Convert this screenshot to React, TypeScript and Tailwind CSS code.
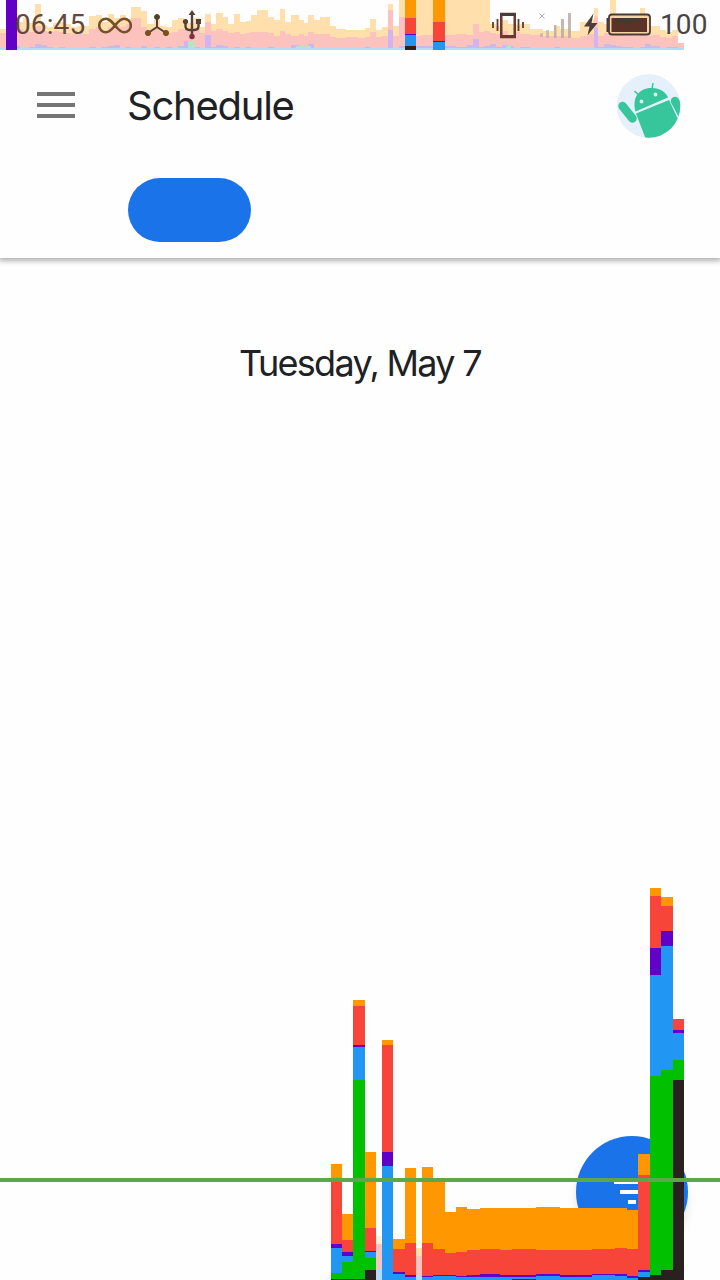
const ORANGE = "#ff9800";
const RED = "#f7453a";
const PURPLE = "#6200c8";
const BLUE = "#2196f3";
const GREEN = "#00c000";
const BLACK = "#2a2020";
const PALE_ORANGE = "#ffdfac";
const PALE_RED = "#fcc3be";
const PALE_BLUE = "#b4dcf8";

type Bar = { x: number; end: number; parts: [number, string][] };

const bars: Bar[] = [
  { x: 331, end: 342, parts: [[1164, ORANGE], [1182, RED], [1244, PURPLE], [1248, BLUE], [1273, GREEN], [1279, BLACK]] },
  { x: 342, end: 353, parts: [[1214, ORANGE], [1240, RED], [1252, PURPLE], [1256, BLUE], [1262, GREEN], [1279, BLACK]] },
  { x: 353, end: 365, parts: [[1000, ORANGE], [1006, RED], [1045, PURPLE], [1047, BLUE], [1080, GREEN], [1279, BLACK]] },
  { x: 365, end: 376, parts: [[1152, ORANGE], [1228, RED], [1251, PURPLE], [1252, BLUE], [1258, GREEN], [1270, BLACK]] },
  { x: 376, end: 382, parts: [[1236, "#fff0dc"], [1244, PALE_RED], [1270, PALE_BLUE]] },
  { x: 382, end: 393, parts: [[1040, ORANGE], [1045, RED], [1152, PURPLE], [1166, BLUE]] },
  { x: 393, end: 405, parts: [[1239, ORANGE], [1249, RED], [1272, PURPLE], [1274, BLUE]] },
  { x: 405, end: 416, parts: [[1168, ORANGE], [1243, RED], [1275, PURPLE], [1277, BLUE]] },
  { x: 416, end: 422, parts: [[1248, PALE_ORANGE], [1256, PALE_RED], [1276, PALE_BLUE]] },
  { x: 422, end: 433, parts: [[1167, ORANGE], [1243, RED], [1276, PURPLE], [1277, BLUE]] },
  { x: 433, end: 445, parts: [[1180, ORANGE], [1249, RED], [1275, PURPLE], [1276, BLUE]] },
  { x: 445, end: 456, parts: [[1212, ORANGE], [1253, RED], [1275, PURPLE], [1276, BLUE]] },
  { x: 456, end: 467, parts: [[1207, ORANGE], [1252, RED], [1276, PURPLE], [1277, BLUE]] },
  { x: 467, end: 480, parts: [[1209, ORANGE], [1250, RED], [1275, PURPLE], [1277, BLUE]] },
  { x: 480, end: 500, parts: [[1208, ORANGE], [1249, RED], [1274, PURPLE], [1277, BLUE]] },
  { x: 500, end: 512, parts: [[1208, ORANGE], [1250, RED], [1275, PURPLE], [1277, BLUE]] },
  { x: 512, end: 536, parts: [[1208, ORANGE], [1249, RED], [1275, PURPLE], [1277, BLUE], [1279, BLACK]] },
  { x: 536, end: 560, parts: [[1207, ORANGE], [1250, RED], [1274, PURPLE], [1276, BLUE]] },
  { x: 560, end: 592, parts: [[1208, ORANGE], [1250, RED], [1275, PURPLE], [1277, BLUE]] },
  { x: 592, end: 615, parts: [[1208, ORANGE], [1249, RED], [1274, PURPLE], [1275, BLUE]] },
  { x: 615, end: 627, parts: [[1208, ORANGE], [1248, RED], [1274, PURPLE], [1276, BLUE]] },
  { x: 627, end: 638, parts: [[1210, ORANGE], [1249, RED], [1276, PURPLE], [1278, BLUE]] },
  { x: 638, end: 650, parts: [[1154, ORANGE], [1175, RED], [1270, PURPLE], [1272, BLUE], [1277, BLACK]] },
  { x: 650, end: 661, parts: [[888, ORANGE], [896, RED], [948, PURPLE], [975, BLUE], [1076, GREEN], [1275, BLACK]] },
  { x: 661, end: 673, parts: [[897, ORANGE], [906, RED], [931, PURPLE], [946, BLUE], [1070, GREEN], [1270, BLACK]] },
  { x: 673, end: 684, parts: [[1019, RED], [1030, PURPLE], [1033, BLUE], [1060, GREEN], [1080, BLACK]] },
];

// [x, top of orange, top of red, top of blue]
const history: [number, number, number, number][] = [
  [0, 29, 33, 48], [6, 29, 33, 48], [17, 22, 29, 46], [23, 18, 31, 48], [29, 23, 32, 47], [35, 4, 26, 44], [41, 25, 31, 45],
  [47, 27, 32, 47], [53, 23, 31, 48], [59, 22, 32, 47], [65, 24, 33, 48], [71, 27, 34, 48], [77, 26, 32, 48],
  [83, 26, 34, 48], [89, 16, 29, 47], [96, 15, 27, 48], [102, 22, 31, 47], [108, 14, 27, 46], [114, 18, 25, 45],
  [120, 15, 27, 48], [126, 19, 24, 47], [131, 7, 18, 48], [141, 11, 27, 46], [147, 24, 31, 48], [154, 20, 29, 47],
  [160, 26, 32, 48], [166, 27, 33, 47], [172, 20, 32, 48], [178, 18, 29, 46], [184, 23, 30, 41], [194, 18, 28, 47],
  [200, 27, 33, 48], [205, 14, 22, 35], [211, 24, 31, 47], [216, 13, 29, 45], [223, 17, 31, 46], [228, 24, 33, 48],
  [234, 14, 32, 47], [240, 22, 34, 48], [246, 21, 33, 47], [251, 15, 32, 48], [257, 10, 32, 48], [268, 17, 33, 47],
  [274, 20, 36, 48], [280, 9, 31, 48], [285, 22, 34, 48], [291, 15, 36, 45], [299, 20, 34, 48], [304, 23, 36, 48],
  [308, 15, 32, 44], [314, 20, 34, 48], [320, 17, 34, 48], [330, 26, 37, 48], [336, 29, 38, 48], [346, 30, 37, 48],
  [358, 30, 38, 48], [365, 28, 37, 47], [370, 19, 32, 48], [376, 30, 37, 48], [382, 27, 36, 48], [388, 4, 10, 30],
  [393, 26, 36, 48], [399, 0, 17, 46], [405, 0, 25, 45], [416, 0, 36, 46], [422, 0, 35, 46], [433, 0, 32, 45],
  [445, 0, 35, 46], [456, 0, 34, 47], [467, 0, 35, 45], [473, 0, 24, 39], [479, 0, 32, 47], [484, 0, 31, 46],
  [490, 24, 33, 44], [496, 26, 34, 47], [502, 20, 31, 45], [508, 24, 35, 46], [514, 25, 32, 48], [520, 24, 34, 47],
  [530, 29, 35, 48], [543, 31, 36, 48], [554, 26, 36, 47], [560, 29, 36, 48], [570, 31, 38, 48], [580, 22, 36, 48],
  [588, 19, 34, 48], [594, 8, 17, 28], [598, 22, 36, 47], [604, 24, 33, 44], [610, 0, 34, 45], [616, 24, 34, 46],
  [622, 27, 35, 47], [633, 23, 36, 48], [640, 8, 32, 47], [645, 24, 36, 44], [651, 26, 35, 46], [660, 30, 37, 48],
  [666, 32, 38, 47], [672, 30, 36, 47], [678, 43, 43, 48],
];

function StatusHistory() {
  return (
    <svg className="absolute left-0 top-0" width="720" height="50" shapeRendering="crispEdges" aria-hidden="true">
      {history.map(([x, orange, red, blue], i) => {
        const end = i + 1 < history.length ? history[i + 1][0] : 684;
        const spike = blue < 42 && blue > 20;
        return (
          <g key={x}>
            <rect x={x} y={orange} width={end - x} height={50 - orange} fill={PALE_ORANGE} />
            <rect x={x} y={red} width={end - x} height={50 - red} fill={PALE_RED} />
            <rect x={x} y={blue} width={end - x} height={50 - blue} fill={spike ? "#d0b5f0" : "#c9bbe5"} />
            <rect x={x} y={48} width={end - x} height={2} fill={PALE_BLUE} />
          </g>
        );
      })}
      <path d="M20 46h4v2h-4zM188 41h7v7h-7zM296 46h15v2h-15zM506 46h5v2h-5z" fill="#b9e2c6" />
      <rect x="6" y="0" width="11" height="50" fill="#6200c8" />
      <rect x="405" y="0" width="11" height="18" fill={ORANGE} />
      <rect x="405" y="18" width="11" height="16" fill={RED} />
      <rect x="405" y="34" width="11" height="1" fill={PURPLE} />
      <rect x="405" y="35" width="11" height="11" fill={BLUE} />
      <rect x="405" y="46" width="11" height="4" fill={BLACK} />
      <rect x="433" y="0" width="12" height="22" fill={ORANGE} />
      <rect x="433" y="22" width="12" height="19" fill={RED} />
      <rect x="433" y="41" width="12" height="1" fill={PURPLE} />
      <rect x="433" y="42" width="12" height="8" fill={BLUE} />
    </svg>
  );
}

function StatusBar() {
  return (
    <div className="relative h-[50px] w-full">
      <StatusHistory />
      <div className="relative flex h-[50px] items-center text-[28px] leading-[50px] text-[#4b3b35]">
        <span className="ml-[15px] w-[83px] font-[Roboto,sans-serif] tracking-[0.1px] text-[#65483a]">06:45</span>
        <svg width="34" height="24" viewBox="98 12 34 24" fill="none" stroke="#765027" strokeWidth="2.600">
          <path d="M115 24.500C111 20 109 17.700 106 17.700a6.800 6.800 0 0 0 0 13.600c3.500 0 6-3 9-6.800s5.500-6.800 9-6.800a6.800 6.800 0 0 1 0 13.600c-3 0-5.500-2.500-9-6.800" />
        </svg>
        <svg className="ml-[12px]" width="26" height="26" viewBox="144 12 26 26" fill="#53412f" stroke="#53412f">
          <path d="M157 17v10l-9 6M157 27l9 6" fill="none" strokeWidth="2" />
          <circle cx="157" cy="17" r="2.500" />
          <circle cx="148" cy="33" r="2.600" fill="#7a5022" stroke="#7a5022" />
          <circle cx="166" cy="33" r="2.600" fill="#7a5022" stroke="#7a5022" />
        </svg>
        <svg className="ml-[11px]" width="22" height="32" viewBox="181 9 22 32" fill="#584036">
          <path d="M192 10l-3.500 5h7z" />
          <path d="M192 14v20M185.500 22v4q0 4 4 4h5q4 0 4-4v-4" fill="none" stroke="#584036" strokeWidth="2.400" />
          <circle cx="185.500" cy="21.500" r="2.600" />
          <path d="M196 19h5v5h-5z" />
          <circle cx="192" cy="36.500" r="2.700" fill="#78333c" />
        </svg>
        <svg className="ml-auto" width="34" height="30" viewBox="491 10 34 30" fill="none" stroke="#68392c">
          <rect x="501.250" y="14" width="13.500" height="23" strokeWidth="2.500" />
          <path d="M500 14.500h16" strokeWidth="3" stroke="#493c3c" />
          <path d="M500 36.500h16" strokeWidth="3" />
          <path d="M497.500 19v12M493 22v6M518.500 19v12M523 22v6" strokeWidth="1.800" />
        </svg>
        <svg className="ml-[13px]" width="36" height="30" viewBox="538 10 36 30" fill="#b9aca4">
          <path d="M540 33h3v4h-3zM546 30h3v8h-3z" fillOpacity=".65" />
          <path d="M554 25h2.500v13h-2.500zM561 19h3v19h-3zM568 13h3v25h-3z" fillOpacity=".85" />
          <path d="M539.500 13.500l5 5m0-5l-5 5" fill="none" stroke="#b9aca4" />
        </svg>
        <svg className="ml-[10px]" width="14" height="24" viewBox="584 13 14 24" fill="#4c3d3d">
          <path d="M593.500 13.500L584 26.500h5.500L587.500 35.500L597.500 23h-6z" />
        </svg>
        <svg className="ml-[8px]" width="46" height="24" viewBox="606 13 46 24" fill="none">
          <path d="M609 19h-1.500v12h1.500" fill="#4b3434" stroke="#4b3434" strokeWidth="2" />
          <rect x="609" y="14.500" width="41" height="20" rx="3" fill="#f7d3a5" stroke="#4a3b37" strokeWidth="1.800" />
          <rect x="611.500" y="18" width="35.500" height="14" fill="#5b3227" />
          <path d="M616 18h24v4h-10v2h-7v-2h-7z" fill="#403a34" />
        </svg>
        <span className="ml-[8px] mr-[12px] w-[48px] font-[Roboto,sans-serif] tracking-[0.1px] text-[#4a4344]">100</span>
      </div>
    </div>
  );
}

function Avatar() {
  return (
    <svg width="66" height="66" viewBox="616 73 66 66" role="img" aria-label="Account">
      <defs>
        <clipPath id="face">
          <circle cx="648.500" cy="106" r="31.800" />
        </clipPath>
      </defs>
      <circle cx="648.500" cy="106" r="31.800" fill="#e5f0fa" />
      <g clipPath="url(#face)" fill="#37c59c">
        <path d="M635.500 111.500C631 94 643 87.500 652 88c8 .3 14 4 16 9.500z" />
        <path d="M636 113.500l33-13.500 17 36-36 14z" />
        <path d="M622.500 106l10 12.500" fill="none" stroke="#37c59c" strokeWidth="8.500" strokeLinecap="round" />
        <path d="M675 101l8 15" fill="none" stroke="#37c59c" strokeWidth="8.500" strokeLinecap="round" />
        <path d="M638.500 95l-4-4M652 89l1-6" fill="none" stroke="#37c59c" strokeWidth="1.500" />
        <circle cx="641.500" cy="101.500" r="1.900" fill="#d9f6ed" />
        <circle cx="655.500" cy="94.500" r="1.900" fill="#d9f6ed" />
      </g>
    </svg>
  );
}

function UsageChart() {
  return (
    <svg className="pointer-events-none absolute bottom-0 left-0" width="720" height="400" viewBox="0 880 720 400" shapeRendering="crispEdges" aria-hidden="true">
      {bars.map((bar) => (
        <g key={bar.x}>
          {bar.parts.map(([top, color], i) => (
            <rect
              key={top}
              x={bar.x}
              y={top}
              width={bar.end - bar.x}
              height={(i + 1 < bar.parts.length ? bar.parts[i + 1][0] : 1280) - top}
              fill={color}
            />
          ))}
        </g>
      ))}
      <rect x="0" y="1178" width="720" height="4" fill="#5ba84a" />
    </svg>
  );
}

export default function App() {
  return (
    <div className="relative flex h-[1280px] w-[720px] flex-col overflow-hidden bg-[#fefefe] font-[Inter,sans-serif] text-[#202124]">
      <header className="h-[258px] shrink-0 bg-[#fefefe] shadow-[0_2px_5px_1px_rgba(0,0,0,0.3)]">
        <StatusBar />
        <div className="flex h-[112px] items-center pl-[37px] pr-[38px]">
          <button aria-label="Menu" className="flex w-[38px] flex-col gap-[7px] -translate-y-px">
            <span className="h-1 bg-[#757575]" />
            <span className="h-1 bg-[#757575]" />
            <span className="h-1 bg-[#757575]" />
          </button>
          <h1 className="ml-[52px] text-[40px] font-normal leading-[48px] tracking-[-1.250px]">Schedule</h1>
          <div className="ml-auto"><Avatar /></div>
        </div>
        <div className="ml-32 mt-4 h-16 w-[123px] rounded-full bg-[#1a73e8]" />
      </header>
      <main className="flex grow flex-col items-center pt-[81px]">
        <h2 className="whitespace-nowrap text-[36px] font-normal leading-[48px] tracking-[-1.700px]">Tuesday, May 7</h2>
      </main>
      <button aria-label="Filter" className="absolute bottom-8 right-8 flex h-28 w-28 flex-col items-center justify-center gap-[6px] rounded-full bg-[#1a73e8] shadow-[0_8px_12px_-2px_rgba(0,0,0,0.14)]">
        <span className="h-1 w-9 bg-white" />
        <span className="h-1 w-6 bg-white" />
        <span className="h-1 w-2 bg-white" />
      </button>
      <UsageChart />
    </div>
  );
}
